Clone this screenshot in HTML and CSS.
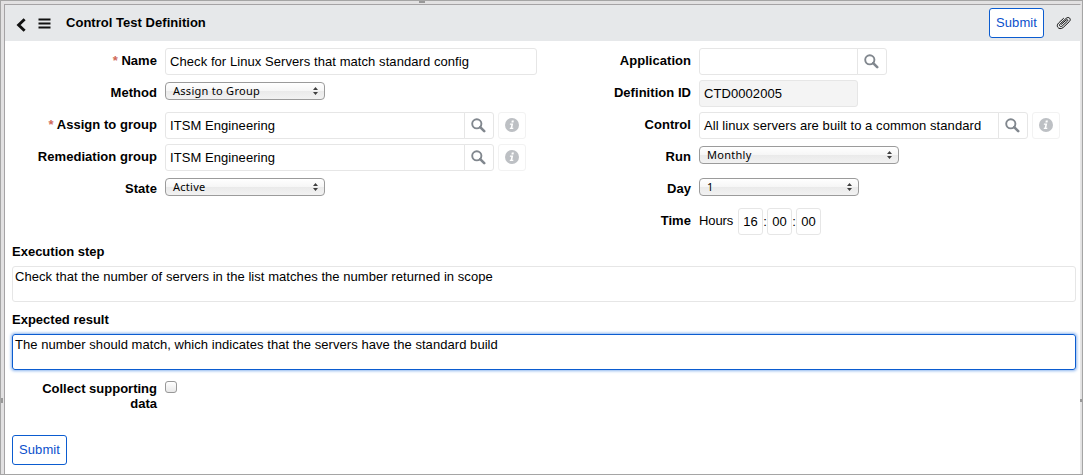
FILE: index.html
```
<!DOCTYPE html>
<html lang="en">
<head>
<meta charset="utf-8">
<title>Control Test Definition</title>
<link rel="stylesheet" href="styles.css">
</head>
<body>
<svg class="defs" width="0" height="0">
  <symbol id="search" viewBox="0 0 15 15"><circle cx="5.8" cy="5.8" r="4.6" fill="none" stroke="#81878e" stroke-width="1.9"/><path d="M9.2 9.2l4 4" stroke="#81878e" stroke-width="2.6" stroke-linecap="round"/></symbol>
  <symbol id="info" viewBox="0 0 14 14"><circle cx="7" cy="7" r="7" fill="#bdc0c4"/><path d="M6.8 2.5h2.1l-.4 2h-2.1zM5 5.6h3.2l-.9 4.2h1.1l-.2 1.2H4.7l.2-1.2h.8l.6-3H4.8z" fill="#fff"/></symbol>
  <symbol id="arrows" viewBox="0 0 5 8"><path d="M0 3l2.5-3L5 3zM0 5h5L2.5 8z" fill="#404040"/></symbol>
</svg>
<div class="window">
  <span class="grip grip-top"></span><span class="grip grip-left"></span><span class="grip grip-right"></span>
  <div class="page">
    <header class="bar">
      <svg class="back" width="10" height="14" viewBox="0 0 10 14"><path d="M8.6 1.2L2.6 7l6 5.8" fill="none" stroke="#111" stroke-width="2.9"/></svg>
      <svg class="menu" width="13" height="12" viewBox="0 0 13 12"><path d="M.5 1.5h12M.5 5.500h12M.5 9.500h12" stroke="#111" stroke-width="1.9"/></svg>
      <h1 class="title">Control Test Definition</h1>
      <button class="submit">Submit</button>
      <svg class="clip" width="16" height="15" viewBox="0 0 16 15"><path d="M5.400 9.300l4.800-4.300c1.100-1 2.200.2 1.200 1.200L6.200 11c-1.700 1.500-3.700-.4-2.100-2l6-5.600c2.700-2.400 5.700.700 3.200 3.200L7.300 12.400c-3.700 3.300-8.200-.8-4.800-4.300L7.500 3.400" fill="none" stroke="#111" stroke-width="1" stroke-linecap="round"/></svg>
    </header>
    <main class="form">
      <div class="columns">
        <section class="column left">
          <div class="row"><label class="label"><span class="star">*</span> Name</label><div class="field wide">Check for Linux Servers that match standard config</div></div>
          <div class="row"><label class="label">Method</label><div class="select w160">Assign to Group<svg class="arrows"><use href="#arrows"/></svg></div></div>
          <div class="row"><label class="label"><span class="star">*</span> Assign to group</label><div class="field joined w300">ITSM Engineering</div><span class="lookup"><svg class="glass"><use href="#search"/></svg></span><span class="infobox"><svg class="info"><use href="#info"/></svg></span></div>
          <div class="row"><label class="label">Remediation group</label><div class="field joined w300">ITSM Engineering</div><span class="lookup"><svg class="glass"><use href="#search"/></svg></span><span class="infobox"><svg class="info"><use href="#info"/></svg></span></div>
          <div class="row"><label class="label">State</label><div class="select w160">Active<svg class="arrows"><use href="#arrows"/></svg></div></div>
        </section>
        <section class="column right">
          <div class="row"><label class="label">Application</label><div class="field joined w159"></div><span class="lookup"><svg class="glass"><use href="#search"/></svg></span></div>
          <div class="row"><label class="label">Definition ID</label><div class="field readonly w159">CTD0002005</div></div>
          <div class="row"><label class="label">Control</label><div class="field joined w300">All linux servers are built to a common standard</div><span class="lookup"><svg class="glass"><use href="#search"/></svg></span><span class="infobox"><svg class="info"><use href="#info"/></svg></span></div>
          <div class="row"><label class="label">Run</label><div class="select w200">Monthly<svg class="arrows"><use href="#arrows"/></svg></div></div>
          <div class="row"><label class="label">Day</label><div class="select w160">1<svg class="arrows"><use href="#arrows"/></svg></div></div>
          <div class="row"><label class="label">Time</label><span class="hours">Hours</span><div class="field time">16</div><span class="colon">:</span><div class="field time">00</div><span class="colon">:</span><div class="field time">00</div></div>
        </section>
      </div>
      <label class="heading">Execution step</label>
      <div class="area">Check that the number of servers in the list matches the number returned in scope</div>
      <label class="heading">Expected result</label>
      <div class="area focused">The number should match, which indicates that the servers have the standard build</div>
      <div class="collect"><label class="collect-label">Collect supporting data</label><span class="checkbox"></span></div>
      <button class="submit">Submit</button>
    </main>
  </div>
</div>
</body>
</html>
```

FILE: styles.css
```
* { box-sizing: border-box; }
body { margin: 0; font: 13px/15px "Liberation Sans", Arial, sans-serif; color: #000; letter-spacing: .07px; }
.defs { position: absolute; }
.window { position: relative; width: 1083px; height: 475px; border: 1px solid #a5a5a5; background: #e2e1e2; padding: 3px 1px 0 3px; }
.page { height: 470px; border-top: 1px solid #a5a3a5; border-left: 1px solid #a5a3a5; border-right: 1px solid #e6e6e6; background: #fff; }
.grip { position: absolute; background: #999; }
.grip-top { left: 418px; top: 0; width: 6px; height: 2px; }
.grip-left { left: 0; top: 397px; width: 2px; height: 5px; }
.grip-right { right: 0; top: 398px; width: 2px; height: 3px; }
.bar { height: 36px; background: #e6e8ea; display: flex; align-items: center; padding: 0 8px 0 11px; }
.back { margin-top: 3px; }
.menu { margin: 2px 0 0 12px; }
.title { margin: 0 auto 0 15px; padding-bottom: 1px; font-size: 13px; line-height: 15px; font-weight: bold; letter-spacing: .03px; }
.submit { width: 55px; height: 30px; padding: 0 0 2px; border: 1px solid #0b5cd0; border-radius: 3px; background: #fff; color: #0b50cc; font: inherit; font-size: 13px; letter-spacing: .1px; }
.clip { margin: 0 0 2px 12px; }
.form { padding: 7px 4px 0 7px; }
.columns { display: flex; height: 192px; margin-left: -7px; }
.column { width: 534px; display: grid; grid-auto-rows: 27px; row-gap: 5px; align-content: start; }
.row { display: flex; align-items: center; }
.label { width: 152px; margin-right: 8px; text-align: right; font-weight: bold; padding-bottom: 2px; white-space: nowrap; letter-spacing: .04px; }
.star { color: #d0695a; }
.field { height: 27px; border: 1px solid #e6e6e6; border-radius: 3px; padding: 0 4px; line-height: 26px; white-space: nowrap; }
.joined { border-radius: 3px 0 0 3px; }
.readonly { background: #f4f4f4; }
.wide { width: 372px; }
.w159 { width: 159px; }
.w160 { width: 160px; }
.w200 { width: 200px; }
.w300 { width: 300px; }
.lookup, .infobox { height: 27px; display: flex; align-items: center; justify-content: center; border: 1px solid #e6e6e6; }
.lookup { width: 30px; margin-left: -1px; padding-right: 2px; border-radius: 0 3px 3px 0; }
.infobox { width: 28px; margin-left: 4px; padding-bottom: 1px; border-color: #f2f2f2; border-radius: 3px; }
.glass { width: 15px; height: 15px; }
.info { width: 14px; height: 14px; }
.select { height: 18px; margin-bottom: 7px; margin-top: 2px; display: flex; align-items: center; justify-content: space-between; padding: 0 6px 1px 7px; border: 1px solid #9b9b9b; border-radius: 4px; background: linear-gradient(#fff 0%, #f6f6f6 50%, #eaeaea 51%, #f2f2f2 100%); font-family: "Noto Sans", sans-serif; font-size: 11px; letter-spacing: .28px; }
.arrows { width: 5px; height: 8px; }
.hours { width: 39px; padding-bottom: 2px; letter-spacing: -.1px; }
.time { width: 25px; text-align: center; }
.colon { width: 4px; text-align: center; letter-spacing: 0; }
.heading { display: block; height: 26px; padding-top: 4px; font-weight: bold; letter-spacing: 0; }
.area { height: 36px; margin-bottom: 6px; padding: 2px; border: 1px solid #e6e6e6; border-radius: 3px; letter-spacing: .055px; }
.focused { border-color: #0b5cd0; box-shadow: 0 0 3px 1px #8cb5ee; margin-bottom: 11px; }
.collect { display: flex; height: 54px; }
.collect-label { width: 145px; margin-right: 8px; text-align: right; font-weight: bold; letter-spacing: 0; }
.checkbox { width: 12px; height: 12px; border: 1px solid #989898; border-radius: 3px; background: linear-gradient(#fff, #e8e8e8); }
```
